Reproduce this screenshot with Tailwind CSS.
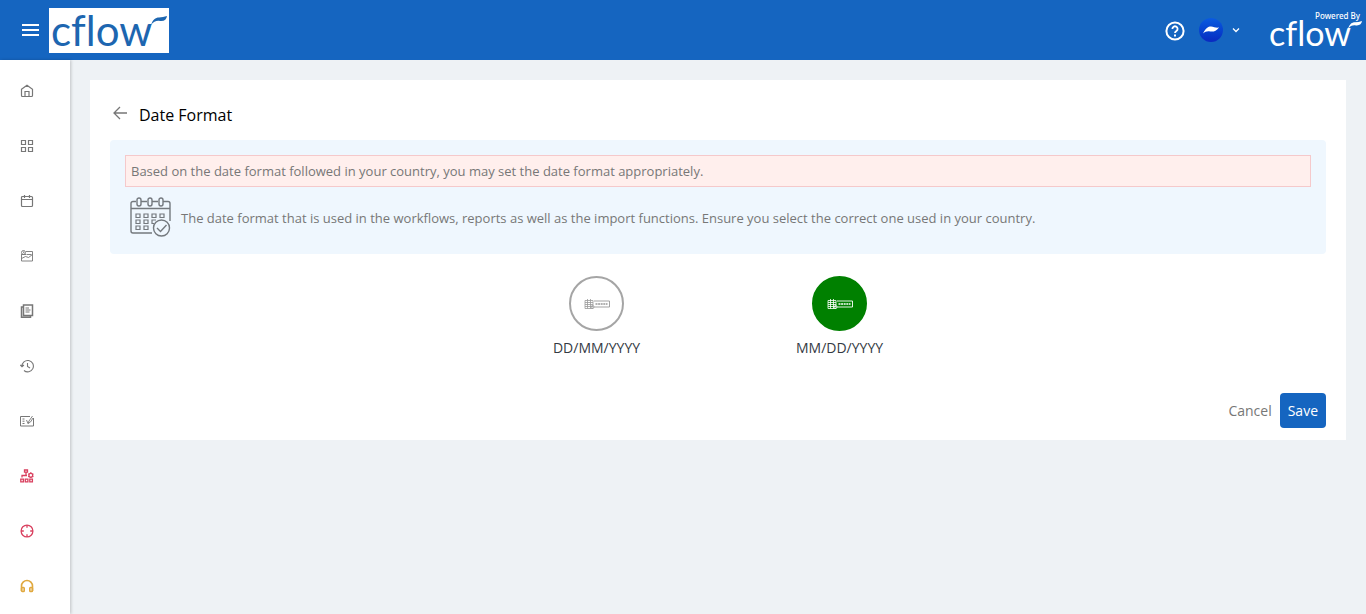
<!DOCTYPE html>
<html lang="en">
<head>
<meta charset="utf-8">
<meta name="viewport" content="width=device-width, initial-scale=1">
<title>Date Format</title>
<script src="https://cdn.jsdelivr.net/npm/@tailwindcss/browser@4"></script>
</head>
<body class="flex min-h-screen flex-col bg-[#eef2f5] font-['Open_Sans',sans-serif] text-[13px] text-[#777]">
<svg class="hidden">
  <symbol id="swoosh" viewBox="0 0 18 10"><path d="M0 10C2 4 5 1.500 9 1.500C12 1.500 15 1 18 0C17.500 4 15 6 10 5.500C6 5 3 6 0 10Z" fill="currentColor"/></symbol>
  <symbol id="format" viewBox="0 0 26 12" fill="none" stroke="currentColor">
    <path d="M1 2.500h8v8H1zM1 4.500h8M1 6.500h8M1 8.500h8M3.500 1v9.500M6.500 1v9.500" stroke-width=".8"/>
    <circle cx="8.500" cy="9" r="1.500" stroke-width=".7"/>
    <path d="M10 3h15.500v6H10" stroke-width=".9"/><path d="M11.500 6h12" stroke-width="1.300" stroke-dasharray="2 .6"/>
  </symbol>
</svg>

<header class="flex h-15 shrink-0 items-center bg-[#1565c0] pr-1 text-white">
  <button type="button" aria-label="Menu" class="ml-[22px] flex w-[17px] flex-col gap-[3px]">
    <span class="h-0.5 w-full bg-white"></span><span class="h-0.5 w-full bg-white"></span><span class="h-0.5 w-full bg-white"></span>
  </button>
  <a href="#" class="relative ml-2.5 flex h-[45px] w-30 items-center bg-white pl-0.5 font-['Lato',sans-serif] text-[42px] leading-[42px] text-[#1d66b0] [font-variant-ligatures:none]">cflow
    <svg class="absolute top-2 right-0.5 h-[9px] w-4"><use href="#swoosh"/></svg>
  </a>
  <div class="ml-auto flex items-center">
    <button type="button" aria-label="Help" class="pt-0.5">
      <svg class="size-5" viewBox="0 0 20 20" fill="none" stroke="currentColor" stroke-width="2"><circle cx="10" cy="10" r="8.600"/><path d="M7.400 8a2.600 2.600 0 1 1 4 2.100c-1 .7-1.400 1-1.400 2" stroke-width="1.800"/><path d="M10 13.500v1.900"/></svg>
    </button>
    <button type="button" aria-label="Account" class="ml-3.5 flex items-center gap-2">
      <span class="flex size-6 items-center justify-center rounded-full bg-linear-to-b from-[#0b5be0] to-[#0a28c0]">
        <svg class="h-2.5 w-[18px]" viewBox="0 0 18 10"><path d="M1 8.500C4 3 6 1.500 9 1.500C12 2 14 3 17 2.500C14 6 12 7 8 6.500C5 6 3 7 1 8.500Z" fill="#fff"/></svg>
      </span>
      <svg class="size-2.5" viewBox="0 0 10 10" fill="none" stroke="currentColor" stroke-width="1.300"><path d="M2 3.500l3 3l3-3"/></svg>
    </button>
    <a href="#" class="relative ml-7 flex w-[93px] flex-col pb-[3px]">
      <span class="pr-0.5 text-right font-['Noto_Sans',sans-serif] text-[8px] leading-[9px] font-medium">Powered By</span>
      <span class="font-['Lato',sans-serif] text-[34px] leading-[26px] [font-variant-ligatures:none]">cflow</span>
      <svg class="absolute top-2.5 right-0 h-2 w-3.5"><use href="#swoosh"/></svg>
    </a>
  </div>
</header>

<div class="flex flex-1">
  <nav aria-label="Main" class="flex w-[70px] shrink-0 flex-col gap-[41px] bg-white pt-6 pl-5 text-[#777] shadow-[1px_0_3px_rgba(0,0,0,0.2)]">
    <a href="#" aria-label="Home"><svg class="size-3.5" viewBox="0 0 14 14" fill="none" stroke="currentColor" stroke-width="1.200"><path d="M1.500 5.300L7 1.200l5.500 4.100v6.200a1 1 0 0 1-1 1h-9a1 1 0 0 1-1-1zM5 12.500V7.500h4v5"/></svg></a>
    <a href="#" aria-label="Apps"><svg class="size-3.5" viewBox="0 0 14 14" fill="none" stroke="currentColor" stroke-width="1.200"><path d="M1.500 1.500h4v4h-4zM8.500 1.500h4v4h-4zM1.500 8.500h4v4h-4zM8.500 8.500h4v4h-4z"/></svg></a>
    <a href="#" aria-label="Calendar"><svg class="size-3.5" viewBox="0 0 14 14" fill="none" stroke="currentColor" stroke-width="1.200"><rect x="1.500" y="2.500" width="11" height="10" rx="1"/><path d="M1.500 5.500h11M4.500 1v3M9.500 1v3"/></svg></a>
    <a href="#" aria-label="Reports"><svg class="size-3.5" viewBox="0 0 14 14" fill="none" stroke="currentColor" stroke-width=".9"><path d="M6 2.500h6.500v9.500h-11V6M1.500 9.500l4-2 3 1 4-3M6.500 5.500h5"/><circle cx="3.500" cy="3.500" r="2"/><path d="M1 5.500h5M3.500 2.500v1.200h1"/></svg></a>
    <a href="#" aria-label="Documents"><svg class="size-3.5" viewBox="0 0 14 14" fill="none" stroke="currentColor" stroke-width="1.500"><path d="M3.500 1h9v10.500h-9zM3.500 3h-2v10.200h9V11.500"/><path d="M5.500 4h3.500M5.500 6h5M5.500 8h4" stroke-width="1"/></svg></a>
    <a href="#" aria-label="History"><svg class="size-3.5" viewBox="0 0 14 14" fill="none" stroke="currentColor" stroke-width="1.100"><path d="M2 7.500a5.700 5.700 0 1 1 2 4M.3 6L2 7.700 3.900 6M7.500 4v3.500L10 9"/></svg></a>
    <a href="#" aria-label="Forms"><svg class="size-3.5" viewBox="0 0 14 14" fill="none" stroke="currentColor"><path d="M10 2.500H.5v9.500h13V4M2.500 5h2M2.500 7.200h2M2.500 9.500h2"/><path d="M6.500 6l1.500 3.500M8 9.500l1-2.500L12.500 2M8 9.500l2.500-1.500L13 4" stroke-width=".9"/></svg></a>
    <a href="#" aria-label="Workflow setup" class="text-[#d9405f]"><svg class="size-3.5" viewBox="0 0 14 14" fill="none" stroke="currentColor" stroke-width="1.300"><path d="M4.500 1h3v2.200h-3zM6 3.200v3M2 8.500V6.500h5M.8 10.200h2.600v2.600H.8zM5.300 10.200h2.600v2.600H5.300zM9.800 10.200h2.600v2.600H9.800z"/><circle cx="10.800" cy="6.200" r="1.900"/><path d="M10.800 3.300v1M10.800 8.100v1M8.200 4.700l.9.500M12.500 7.200l.9.500M8.200 7.700l.9-.5M12.500 5.200l.9-.5"/></svg></a>
    <a href="#" aria-label="Tour" class="text-[#d9405f]"><svg class="size-3.5" viewBox="0 0 14 14" fill="none" stroke="currentColor" stroke-width="1.300"><circle cx="7" cy="7" r="5.900"/><path d="M7 1v2.800M7 10.200V13M1 7h2.800M10.200 7H13"/></svg></a>
    <a href="#" aria-label="Support" class="text-[#e0a83e]"><svg class="size-3.5" viewBox="0 0 14 14" fill="none" stroke="currentColor" stroke-width="1.600"><path d="M1.500 12V7a5.500 5.500 0 0 1 11 0v5"/><rect x="1.600" y="8.500" width="2.600" height="4" rx=".7"/><rect x="9.800" y="8.500" width="2.600" height="4" rx=".7"/></svg></a>
  </nav>

  <main class="min-w-0 flex-1 p-5">
    <section class="bg-white px-5 pt-5 pb-3">
      <div class="flex h-10 items-start">
        <a href="#" aria-label="Back" class="mt-1.5 ml-[3px]"><svg class="size-3.5" viewBox="0 0 14 14" fill="none" stroke="currentColor" stroke-width="1.300"><path d="M14 7H1M7 1L1 7l6 6"/></svg></a>
        <h1 class="ml-3 pt-[3px] text-base leading-6 font-medium text-black">Date Format</h1>
      </div>
      <div class="rounded-sm bg-[#eff7fe] p-[15px]">
        <p class="border border-[#f5c9cb] bg-[#ffefed] px-[5px] py-[5px] leading-5">Based on the date format followed in your country, you may set the date format appropriately.</p>
        <div class="mt-2.5 flex items-start gap-2.5 px-[5px]">
          <svg class="h-10 w-[41px] shrink-0" viewBox="0 0 41 40" fill="none" stroke="#74797e" stroke-width="1.400">
            <path d="M6 4.500H3a2 2 0 0 0-2 2V34a2 2 0 0 0 2 2h19M11 4.500h6M22 4.500h6M33 4.500h5a2 2 0 0 1 2 2V24M1 11.500h39"/>
            <rect x="7" y="1" width="4" height="8" rx="2"/><rect x="18" y="1" width="4" height="8" rx="2"/><rect x="29" y="1" width="4" height="8" rx="2"/>
            <path d="M6 17h4v3.500H6zM14 17h4v3.500h-4zM22 17h4v3.500h-4zM30 17h4v3.500h-4zM6 23h4v3.500H6zM14 23h4v3.500h-4zM26 23h-4v3.500h2M6 29h4v3.500H6zM14 29h4v3.500h-4z" stroke-width="1.200"/>
            <circle cx="31.500" cy="31" r="8"/><path d="M27 31l3.500 3.500L36.500 28"/>
          </svg>
          <p class="py-[11px] leading-5">The date format that is used in the workflows, reports as well as the import functions. Ensure you select the correct one used in your country.</p>
        </div>
      </div>
      <form>
        <fieldset aria-label="Date format" class="mx-auto mt-5.5 grid max-w-[486px] grid-cols-2 text-sm text-[#343a43]">
          <label class="flex cursor-pointer flex-col items-center gap-[7px]">
            <input type="radio" name="format" value="dmy" class="peer sr-only">
            <span class="flex size-[55px] items-center justify-center rounded-full border-2 border-[#a5a5a5] text-[#999] peer-checked:border-[#008000] peer-checked:bg-[#008000] peer-checked:text-white"><svg class="h-3 w-[26px]"><use href="#format"/></svg></span>
            <span>DD/MM/YYYY</span>
          </label>
          <label class="flex cursor-pointer flex-col items-center gap-[7px]">
            <input type="radio" name="format" value="mdy" class="peer sr-only" checked>
            <span class="flex size-[55px] items-center justify-center rounded-full border-2 border-[#a5a5a5] text-[#999] peer-checked:border-[#008000] peer-checked:bg-[#008000] peer-checked:text-white"><svg class="h-3 w-[26px]"><use href="#format"/></svg></span>
            <span>MM/DD/YYYY</span>
          </label>
        </fieldset>
        <div class="mt-[35px] flex items-center justify-end gap-2 text-sm">
          <button type="button">Cancel</button>
          <button type="submit" class="h-[35px] rounded-sm bg-[#1565c0] px-2 text-white">Save</button>
        </div>
      </form>
    </section>
  </main>
</div>
</body>
</html>
